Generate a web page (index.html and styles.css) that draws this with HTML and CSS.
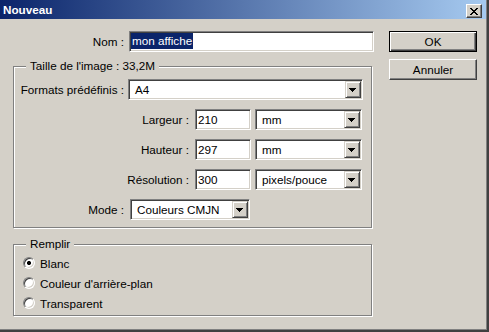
FILE: index.html
```html
<!DOCTYPE html>
<html lang="fr">
<head>
<meta charset="utf-8">
<title>Nouveau</title>
<link rel="stylesheet" href="styles.css">
</head>
<body>
<div class="window">
  <div class="titlebar">
    <span class="title">Nouveau</span>
    <span class="close"><svg width="8" height="7" viewBox="0 0 8 7" shape-rendering="crispEdges"><path d="M0 0h2v1H0zM6 0h2v1H6zM1 1h2v1H1zM5 1h2v1H5zM2 2h4v1H2zM3 3h2v1H3zM2 4h4v1H2zM1 5h2v1H1zM5 5h2v1H5zM0 6h2v1H0zM6 6h2v1H6z" fill="#000"/></svg></span>
  </div>
  <div class="content">
    <div class="main">
      <div class="row">
        <span class="lbl lbl-nom">Nom :</span>
        <div class="field name"><span class="sel">mon affiche</span></div>
      </div>

      <div class="group size-group">
        <span class="legend">Taille de l'image : 33,2M</span>
        <div class="row">
          <span class="lbl lbl-short">Formats prédéfinis :</span>
          <div class="field combo formats"><span class="val">A4</span><span class="arrow"><svg width="7" height="4" viewBox="0 0 7 4" shape-rendering="crispEdges"><path d="M0 0h7v1H0zM1 1h5v1H1zM2 2h3v1H2zM3 3h1v1H3z" fill="#000"/></svg></span></div>
        </div>
        <div class="row">
          <span class="lbl lbl-long">Largeur :</span>
          <div class="field num">210</div>
          <div class="field combo unit"><span class="val">mm</span><span class="arrow"><svg width="7" height="4" viewBox="0 0 7 4" shape-rendering="crispEdges"><path d="M0 0h7v1H0zM1 1h5v1H1zM2 2h3v1H2zM3 3h1v1H3z" fill="#000"/></svg></span></div>
        </div>
        <div class="row">
          <span class="lbl lbl-long">Hauteur :</span>
          <div class="field num">297</div>
          <div class="field combo unit"><span class="val">mm</span><span class="arrow"><svg width="7" height="4" viewBox="0 0 7 4" shape-rendering="crispEdges"><path d="M0 0h7v1H0zM1 1h5v1H1zM2 2h3v1H2zM3 3h1v1H3z" fill="#000"/></svg></span></div>
        </div>
        <div class="row">
          <span class="lbl lbl-long">Résolution :</span>
          <div class="field num">300</div>
          <div class="field combo unit"><span class="val">pixels/pouce</span><span class="arrow"><svg width="7" height="4" viewBox="0 0 7 4" shape-rendering="crispEdges"><path d="M0 0h7v1H0zM1 1h5v1H1zM2 2h3v1H2zM3 3h1v1H3z" fill="#000"/></svg></span></div>
        </div>
        <div class="row">
          <span class="lbl lbl-mode">Mode :</span>
          <div class="field combo mode"><span class="val">Couleurs CMJN</span><span class="arrow"><svg width="7" height="4" viewBox="0 0 7 4" shape-rendering="crispEdges"><path d="M0 0h7v1H0zM1 1h5v1H1zM2 2h3v1H2zM3 3h1v1H3z" fill="#000"/></svg></span></div>
        </div>
      </div>

      <div class="group fill-group">
        <span class="legend">Remplir</span>
        <div class="radio-row"><span class="radio checked"></span><span>Blanc</span></div>
        <div class="radio-row"><span class="radio"></span><span>Couleur d'arrière-plan</span></div>
        <div class="radio-row"><span class="radio"></span><span>Transparent</span></div>
      </div>
    </div>

    <div class="buttons">
      <button class="btn default">OK</button>
      <button class="btn">Annuler</button>
    </div>
  </div>
</div>
</body>
</html>
```

FILE: styles.css
```css
* { box-sizing: border-box; }

html, body {
  margin: 0;
  padding: 0;
  background: #d4d0c8;
}

body {
  font-family: "Liberation Sans", Arial, sans-serif;
  font-size: 11.7px;
  color: #000;
}

.window {
  width: 489px;
  height: 332px;
  background: #d4d0c8;
  border-right: 2px solid #404040;
  border-bottom: 2px solid #404040;
  padding-right: 1px;
  padding-bottom: 1px;
  box-shadow: inset -1px -1px 0 #808080;
  display: flex;
  flex-direction: column;
}

.titlebar {
  height: 19px;
  flex-shrink: 0;
  background: linear-gradient(to right, #0a246a 0%, #a6caf0 100%);
  display: flex;
  justify-content: space-between;
  align-items: flex-start;
}

.title {
  color: #fff;
  font-weight: bold;
  line-height: 19px;
  padding-left: 3px;
}

.close {
  width: 16px;
  height: 14px;
  margin-top: 4px;
  margin-right: 4px;
  background: #d4d0c8;
  border: 1px solid;
  border-color: #fff #404040 #404040 #fff;
  box-shadow: inset -1px -1px 0 #808080;
  display: flex;
  align-items: center;
  justify-content: center;
}
.close svg { display: block; margin-left: -1px; }

.content {
  display: flex;
  padding: 12px 0 0 13px;
}

.main {
  width: 360px;
  flex-shrink: 0;
  display: flex;
  flex-direction: column;
}

.row {
  display: flex;
  align-items: center;
  height: 21px;
}

.lbl {
  text-align: right;
  white-space: nowrap;
  flex-shrink: 0;
  margin-top: -1px;
}
.lbl-nom { width: 111px; margin-right: 5px; }
.lbl-short { width: 110px; margin-right: 4px; }
.lbl-long { width: 175px; margin-right: 6px; }
.lbl-mode { width: 110px; margin-right: 6px; }

.field {
  height: 21px;
  flex-shrink: 0;
  background: #fff;
  border: 1px solid;
  border-color: #808080 #fff #fff #808080;
  box-shadow: inset 1px 1px 0 #404040, inset -1px -1px 0 #d4d0c8;
  padding: 1px;
  display: flex;
  align-items: center;
  white-space: nowrap;
}

.name { width: 245px; }
.sel {
  background: #0a246a;
  color: #fff;
  line-height: 16px;
  padding: 0 1px 0 1px;
  margin-top: -1px;
}

.num {
  width: 56px;
  margin-right: 4px;
  padding-left: 2px;
  padding-bottom: 2px;
}

.combo { justify-content: space-between; }
.combo .val { padding-left: 5px; padding-bottom: 1px; }
.formats { width: 235px; }
.unit { width: 107px; }
.mode { width: 120px; }

.arrow {
  width: 16px;
  height: 17px;
  flex-shrink: 0;
  background: #d4d0c8;
  border: 1px solid;
  border-color: #d4d0c8 #404040 #404040 #d4d0c8;
  box-shadow: inset 1px 1px 0 #fff, inset -1px -1px 0 #808080;
  display: flex;
  align-items: center;
  justify-content: center;
}
.arrow svg { display: block; margin-left: -1px; }

.group {
  position: relative;
  width: 359px;
  border: 1px solid #808080;
  box-shadow: inset 1px 1px 0 #fff, 1px 1px 0 #fff;
  display: flex;
  flex-direction: column;
}

.legend {
  position: absolute;
  left: 12px;
  top: -8px;
  padding: 0 4px;
  line-height: 14px;
  background: #d4d0c8;
  white-space: nowrap;
}

.size-group {
  margin-top: 14px;
  padding: 12px 0 7px 0;
  gap: 9px;
}
.size-group .row { padding-left: 0; }

.fill-group {
  margin-top: 16px;
  padding: 8px 0 2px 9px;
}

.radio-row {
  height: 20px;
  display: flex;
  align-items: center;
  gap: 5px;
}

.radio {
  width: 12px;
  height: 12px;
  border-radius: 50%;
  background: #fff;
  border: 1px solid;
  border-color: #808080 #fff #fff #808080;
  box-shadow: inset 1px 1px 0 #404040, inset -1px -1px 0 #d4d0c8;
  flex-shrink: 0;
}
.radio.checked {
  background: radial-gradient(circle at 50% 50%, #000 0, #000 1.8px, #fff 2.3px);
}

.buttons {
  margin-left: 16px;
  width: 88px;
  display: flex;
  flex-direction: column;
  gap: 7px;
}

.btn {
  font: inherit;
  color: #000;
  width: 88px;
  height: 21px;
  padding: 0;
  background: #d4d0c8;
  border: 1px solid;
  border-color: #fff #404040 #404040 #fff;
  box-shadow: inset -1px -1px 0 #808080;
  text-align: center;
}
.btn.default {
  border: 1px solid #000;
  box-shadow: inset 1px 1px 0 #fff, inset -1px -1px 0 #404040, inset -2px -2px 0 #808080;
}
```
